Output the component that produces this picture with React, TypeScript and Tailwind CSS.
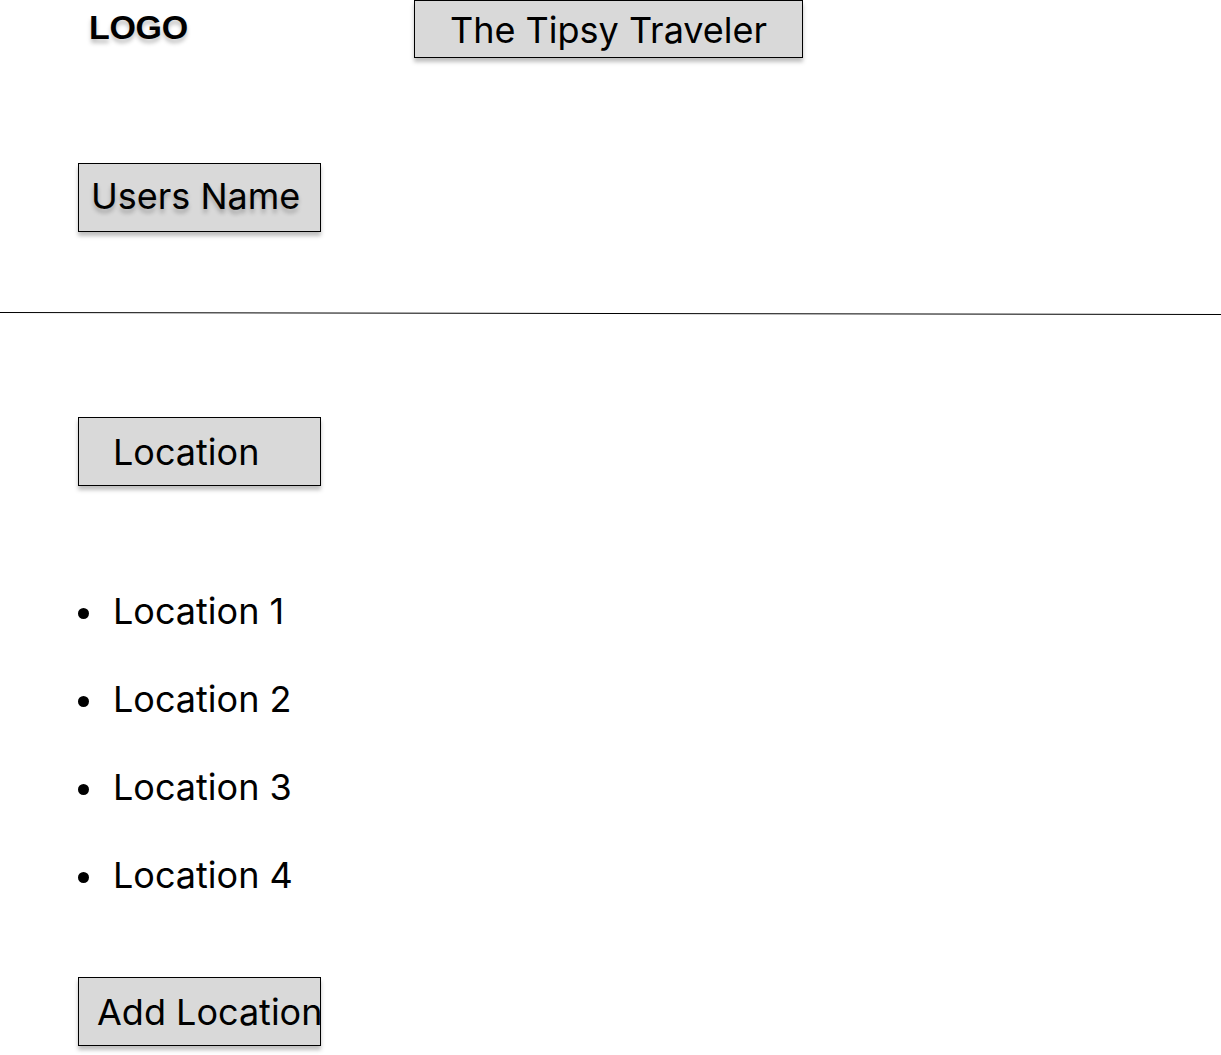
import React from 'react';

const boxBase =
  'h-[69px] w-[243px] flex items-center border border-black bg-[#d9d9d9] shadow-[0_4px_4px_rgba(0,0,0,0.25)] overflow-hidden whitespace-nowrap';

const locations = ['Location 1', 'Location 2', 'Location 3', 'Location 4'];

const App: React.FC = () => {
  return (
    <div className="w-[1221px] h-[1055px] bg-white overflow-hidden text-black font-['Inter',sans-serif] text-[36px] leading-[44px]">
      {/* header */}
      <div className="flex items-start">
        <div className="ml-[89px] mt-[10px] w-[325px] font-['Liberation_Sans',Arial,sans-serif] font-bold text-[34px] leading-[34px] tracking-[-0.3px] [text-shadow:0_4px_4px_rgba(0,0,0,0.25)]">
          LOGO
        </div>
        <div className="h-[58px] w-[389px] flex items-center justify-center border border-black bg-[#d9d9d9] shadow-[0_4px_4px_rgba(0,0,0,0.25)]">
          <span className="pt-[2px]">The Tipsy Traveler</span>
        </div>
      </div>

      <div className="ml-[78px] mt-[105px]">
        <div className={`${boxBase} pl-[12px]`}>
          <span className="-mt-[3px] [text-shadow:0_4px_4px_rgba(0,0,0,0.25)]">Users Name</span>
        </div>
      </div>

      <svg className="block mt-[80px]" width="1221" height="4" viewBox="0 0 1221 4">
        <line x1="0" y1="0.5" x2="1221" y2="2.5" stroke="#000" strokeWidth="1" />
      </svg>

      <div className="ml-[78px] mt-[101px]">
        <div className={`${boxBase} pl-[34px]`}>
          <span>Location</span>
        </div>
      </div>

      <ul className="ml-[78px] mt-[103px] flex flex-col gap-[44px]">
        {locations.map((loc) => (
          <li key={loc} className="flex items-center">
            <span className="w-[11px] h-[11px] rounded-full bg-black mr-[24px] mt-[4px]" />
            <span>{loc}</span>
          </li>
        ))}
      </ul>

      <div className="ml-[78px] mt-[80px]">
        <div className={`${boxBase} pl-[18px]`}>
          <span>Add Location</span>
        </div>
      </div>
    </div>
  );
};

export default App;
